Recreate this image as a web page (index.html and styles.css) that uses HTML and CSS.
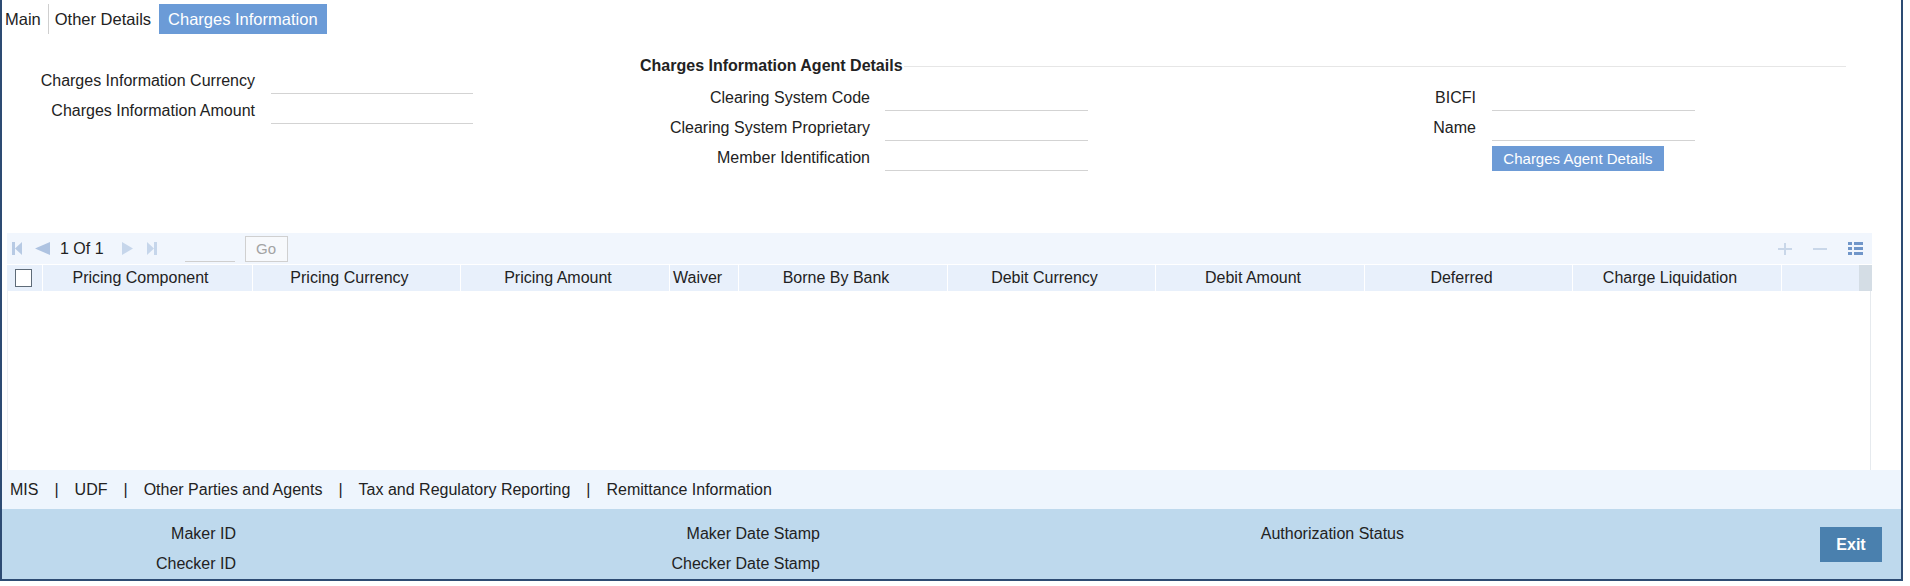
FILE: index.html
```html
<!DOCTYPE html>
<html lang="en">
<head>
<meta charset="utf-8">
<title>Charges Information</title>
<link rel="stylesheet" href="styles.css">
</head>
<body>
<div class="frame">
  <nav class="tabs">
    <span class="tab tab-main">Main</span>
    <span class="tab tab-other">Other Details</span>
    <span class="tab tab-active">Charges Information</span>
  </nav>

  <section class="form">
    <div class="fields-left">
      <div class="row"><label class="lbl lbl-left">Charges Information Currency</label><span class="input"></span></div>
      <div class="row"><label class="lbl lbl-left">Charges Information Amount</label><span class="input"></span></div>
    </div>

    <div class="agent">
      <div class="legend"><span class="legend-text">Charges Information Agent Details</span><span class="rule"></span></div>
      <div class="agent-cols">
        <div class="col col-a">
          <div class="row"><label class="lbl lbl-mid">Clearing System Code</label><span class="input input-a"></span></div>
          <div class="row"><label class="lbl lbl-mid">Clearing System Proprietary</label><span class="input input-a"></span></div>
          <div class="row"><label class="lbl lbl-mid">Member Identification</label><span class="input input-a"></span></div>
        </div>
        <div class="col col-b">
          <div class="row"><label class="lbl lbl-right">BICFI</label><span class="input input-b"></span></div>
          <div class="row"><label class="lbl lbl-right">Name</label><span class="input input-b"></span></div>
          <div class="row"><span class="lbl lbl-right"></span><button class="btn-agent">Charges Agent Details</button></div>
        </div>
      </div>
    </div>
  </section>

  <section class="grid">
    <div class="toolbar">
      <svg class="ic ic-first" width="10" height="13" viewBox="0 0 10 13"><rect x="0" y="0" width="3" height="13" fill="#b7cae4"/><polygon points="10,0 3,6.5 10,13" fill="#b7cae4"/></svg>
      <svg class="ic ic-prev" width="15" height="13" viewBox="0 0 15 13"><polygon points="15,0 0,6.5 15,13" fill="#aec3e1"/></svg>
      <span class="pager-text">1 Of 1</span>
      <svg class="ic ic-next" width="11" height="13" viewBox="0 0 11 13"><polygon points="0,0 11,6.5 0,13" fill="#c6d6eb"/></svg>
      <svg class="ic ic-last" width="10" height="13" viewBox="0 0 10 13"><polygon points="0,0 7,6.5 0,13" fill="#c6d6eb"/><rect x="7" y="0" width="3" height="13" fill="#c6d6eb"/></svg>
      <span class="go-input"></span>
      <button class="go-btn">Go</button>
      <svg class="ic ic-plus" width="14" height="12" viewBox="0 0 14 12"><rect x="0" y="5" width="14" height="2" fill="#c9d7e9"/><rect x="6" y="0" width="2" height="12" fill="#c9d7e9"/></svg>
      <svg class="ic ic-minus" width="14" height="12" viewBox="0 0 14 12"><rect x="0" y="5" width="14" height="2" fill="#c9d7e9"/></svg>
      <svg class="ic ic-list" width="15" height="15" viewBox="0 0 15 15"><rect x="0" y="1" width="4" height="3" fill="#7096c9"/><rect x="6" y="1" width="9" height="3" fill="#7096c9"/><rect x="0" y="6" width="4" height="3" fill="#7096c9"/><rect x="6" y="6" width="9" height="3" fill="#7096c9"/><rect x="0" y="11" width="4" height="3" fill="#7096c9"/><rect x="6" y="11" width="9" height="3" fill="#7096c9"/></svg>
    </div>
    <div class="thead">
      <div class="th th-check"><span class="checkbox"></span></div>
      <div class="th">Pricing Component</div>
      <div class="th">Pricing Currency</div>
      <div class="th">Pricing Amount</div>
      <div class="th th-waiver">Waiver</div>
      <div class="th">Borne By Bank</div>
      <div class="th">Debit Currency</div>
      <div class="th">Debit Amount</div>
      <div class="th">Deferred</div>
      <div class="th">Charge Liquidation</div>
      <div class="th th-empty"></div>
      <div class="th th-scroll"></div>
    </div>
    <div class="tbody"></div>
  </section>

  <div class="subnav">
    <span class="sub-link">MIS</span><span class="sep">|</span>
    <span class="sub-link">UDF</span><span class="sep">|</span>
    <span class="sub-link">Other Parties and Agents</span><span class="sep">|</span>
    <span class="sub-link">Tax and Regulatory Reporting</span><span class="sep">|</span>
    <span class="sub-link">Remittance Information</span>
  </div>

  <footer class="audit">
    <div class="audit-grid">
      <div class="audit-cell"><span class="audit-lbl">Maker ID</span></div>
      <div class="audit-cell"><span class="audit-lbl">Maker Date Stamp</span></div>
      <div class="audit-cell"><span class="audit-lbl">Authorization Status</span></div>
      <div class="audit-cell"><span class="audit-lbl">Checker ID</span></div>
      <div class="audit-cell"><span class="audit-lbl">Checker Date Stamp</span></div>
      <div class="audit-cell"></div>
    </div>
    <button class="exit">Exit</button>
  </footer>
</div>
</body>
</html>
```

FILE: styles.css
```css
* { box-sizing: border-box; }

html, body {
  margin: 0;
  padding: 0;
  background: #ffffff;
}

body {
  width: 1910px;
  height: 586px;
  overflow: hidden;
  font-family: "Liberation Sans", Arial, sans-serif;
  font-size: 16px;
  color: #222222;
}

.frame {
  width: 1903px;
  height: 581px;
  border-left: 2px solid #2d4b73;
  border-right: 2px solid #2d4b73;
  border-bottom: 2px solid #2d4b73;
  display: flex;
  flex-direction: column;
}

/* Tabs */
.tabs {
  height: 34px;
  padding-top: 4px;
  display: flex;
  align-items: stretch;
  font-size: 16.5px;
}

.tab {
  height: 30px;
  line-height: 30px;
  white-space: nowrap;
}

.tab-main {
  padding: 0 7px 0 3px;
  border-right: 1px solid #cfcfcf;
}

.tab-other {
  padding: 0 8px 0 6px;
}

.tab-active {
  padding: 0 9px;
  background: #6b9bd7;
  color: #ffffff;
}

/* Form */
.form {
  height: 199px;
  display: flex;
  align-items: flex-start;
}

.fields-left {
  margin-top: 32px;
}

.row {
  height: 30px;
  display: flex;
  align-items: center;
}

.lbl {
  display: block;
  text-align: right;
  line-height: 30px;
  white-space: nowrap;
  flex: none;
}

.lbl-left { width: 253px; margin-right: 16px; }
.lbl-mid { width: 230px; margin-right: 15px; }
.lbl-right { width: 230px; margin-right: 16px; }

.input {
  display: block;
  width: 202px;
  height: 25px;
  border-bottom: 1px solid #d3d3d3;
  flex: none;
}

.input-a, .input-b { width: 203px; }

.agent {
  margin-left: 167px;
  margin-top: 22px;
  width: 1206px;
}

.legend {
  height: 20px;
  display: flex;
  align-items: center;
  margin-bottom: 7px;
}

.legend-text {
  font-weight: bold;
  white-space: nowrap;
}

.rule {
  flex: 1;
  height: 1px;
  margin-left: 1px;
  background: #e6e6e6;
}

.agent-cols {
  display: flex;
}

.col-b {
  margin-left: 158px;
}

.btn-agent {
  height: 25px;
  width: 172px;
  padding: 0;
  border: none;
  background: #6d9bd6;
  color: #ffffff;
  font-family: "Liberation Sans", Arial, sans-serif;
  font-size: 15px;
}

/* Grid */
.grid {
  height: 237px;
  margin-left: 5px;
  width: 1865px;
  display: flex;
  flex-direction: column;
}

.toolbar {
  height: 31px;
  background: #f1f6fd;
  display: flex;
  align-items: center;
  margin-bottom: 1px;
}

.ic { display: block; flex: none; }
.ic-first { margin-left: 5px; }
.ic-prev { margin-left: 13px; }
.ic-next { margin-left: 18px; }
.ic-last { margin-left: 14px; }

.pager-text {
  margin-left: 10px;
  white-space: nowrap;
}

.go-input {
  display: block;
  margin-left: 28px;
  width: 50px;
  height: 26px;
  border-bottom: 1px solid #cfcfcf;
}

.go-btn {
  margin-left: 10px;
  width: 43px;
  height: 26px;
  padding: 0;
  border: 1px solid #d0d0d0;
  background: #f7f9fc;
  color: #a3a3a3;
  font-family: "Liberation Sans", Arial, sans-serif;
  font-size: 15px;
}

.ic-plus { margin-left: auto; }
.ic-minus { margin-left: 21px; }
.ic-list { margin-left: 21px; margin-right: 9px; }

.thead {
  height: 26px;
  display: grid;
  grid-template-columns: 35px 210px 208px 209px 69px 209px 208px 209px 208px 209px 78px 13px;
  background: #e8f0fb;
}

.th {
  display: flex;
  align-items: center;
  justify-content: center;
  padding-right: 14px;
  border-left: 1px solid #ffffff;
  white-space: nowrap;
  overflow: hidden;
}

.th-check {
  border-left: none;
  padding: 0 0 0 8px;
  justify-content: flex-start;
}

.th-waiver {
  justify-content: flex-start;
  padding: 0 0 0 3px;
}

.th-empty { padding: 0; }

.th-scroll {
  padding: 0;
  border-left: none;
  background: #d4dde5;
}

.checkbox {
  display: block;
  width: 17px;
  height: 18px;
  border: 1px solid #5e6b78;
  background: #ffffff;
}

.tbody {
  flex: 1;
  border-left: 1px solid #edf0f3;
  border-right: 1px solid #e6eaee;
  margin-right: 1px;
}

/* Sub navigation */
.subnav {
  height: 39px;
  background: #eef5fd;
  display: flex;
  align-items: center;
  padding-left: 8px;
  white-space: nowrap;
}

.sep {
  margin: 0 16px;
}

/* Footer */
.audit {
  height: 70px;
  background: #bed9ed;
  display: flex;
  align-items: flex-start;
}

.audit-grid {
  flex: 1;
  padding-top: 10px;
  display: grid;
  grid-template-columns: 584px 584px 584px;
  grid-auto-rows: 30px;
}

.audit-lbl {
  display: block;
  width: 234px;
  text-align: right;
  line-height: 30px;
  white-space: nowrap;
}

.exit {
  margin-top: 18px;
  margin-right: 19px;
  width: 62px;
  height: 35px;
  padding: 0;
  border: none;
  background: #4a80ae;
  color: #ffffff;
  font-family: "Liberation Sans", Arial, sans-serif;
  font-size: 16px;
  font-weight: bold;
}
```
